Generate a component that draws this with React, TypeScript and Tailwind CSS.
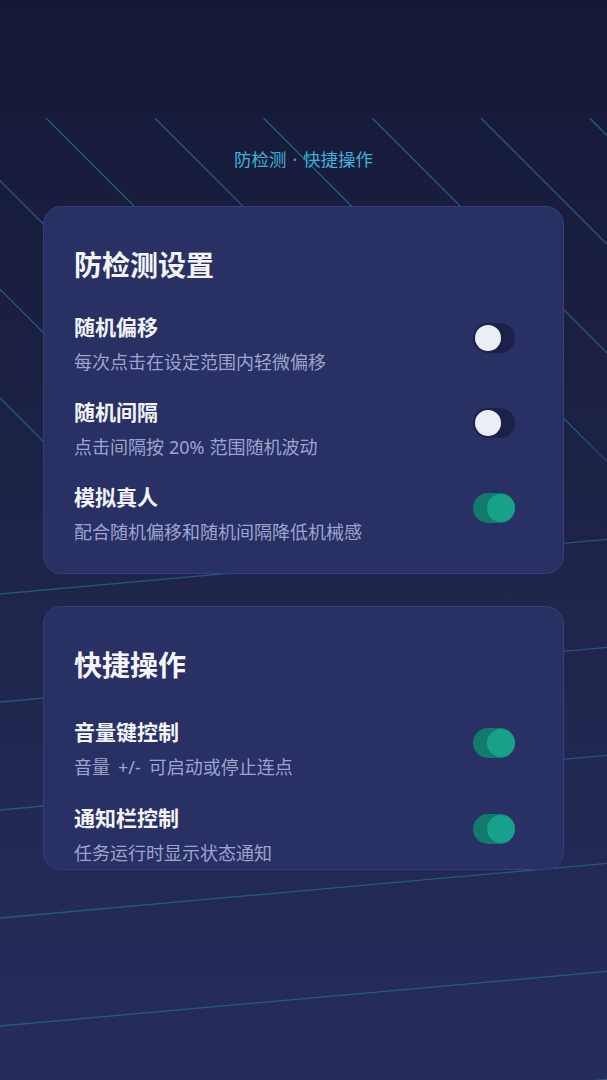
import React from "react";

type Item = { title: string; desc: React.ReactNode; on: boolean };

const group1: Item[] = [
  { title: "随机偏移", desc: "每次点击在设定范围内轻微偏移", on: false },
  { title: "随机间隔", desc: <>点击间隔按<span className="mx-[5px]">20%</span>范围随机波动</>, on: false },
  { title: "模拟真人", desc: "配合随机偏移和随机间隔降低机械感", on: true },
];

const group2: Item[] = [
  { title: "音量键控制", desc: <>音量<span className="mx-[8px]">+/-</span>可启动或停止连点</>, on: true },
  { title: "通知栏控制", desc: "任务运行时显示状态通知", on: true },
];

function Toggle({ on }: { on: boolean }) {
  return (
    <div
      className={
        "relative h-[30px] w-[42px] shrink-0 rounded-full mr-[18px] mb-[12px] " +
        (on ? "bg-[#137a6e]" : "bg-[#1c2148]")
      }
    >
      {on ? (
        <div className="absolute right-0 top-[1px] h-[28px] w-[28px] rounded-full bg-[#17a18a]" />
      ) : (
        <div className="absolute left-[2px] top-[2px] h-[26px] w-[26px] rounded-full bg-[#eceef5]" />
      )}
    </div>
  );
}

function Row({ item }: { item: Item }) {
  return (
    <div className="flex items-center justify-between">
      <div className="flex flex-col">
        <div className="text-[21px] leading-[28px] font-bold text-[#f3f4fa]">{item.title}</div>
        <div className="mt-[8px] text-[18px] leading-[26px] text-[#9ea4cd]">{item.desc}</div>
      </div>
      <Toggle on={item.on} />
    </div>
  );
}

function Background() {
  const diag: number[] = [];
  for (let k = -5; k <= 6; k++) diag.push(46 + 108.7 * k);
  const horiz: number[] = [];
  for (let k = 0; k <= 5; k++) horiz.push(594 + 108 * k);
  return (
    <svg className="absolute inset-0 h-full w-full" width="607" height="1080" viewBox="0 0 607 1080">
      <defs>
        <linearGradient id="fadeDiag" x1="0" y1="0" x2="0" y2="1080" gradientUnits="userSpaceOnUse">
          <stop offset="0" stopColor="#fff" stopOpacity="1" />
          <stop offset="0.40" stopColor="#fff" stopOpacity="1" />
          <stop offset="0.45" stopColor="#fff" stopOpacity="0" />
          <stop offset="1" stopColor="#fff" stopOpacity="0" />
        </linearGradient>
        <mask id="diagMask">
          <rect x="0" y="118" width="607" height="380" fill="url(#fadeDiag)" />
        </mask>
        <clipPath id="horizClip">
          <rect x="0" y="500" width="607" height="580" />
        </clipPath>
      </defs>
      <g mask="url(#diagMask)" stroke="#2a86a6" strokeOpacity="0.6" strokeWidth="1.3">
        {diag.map((x, i) => (
          <line key={i} x1={x} y1={118} x2={x + 400} y2={518} />
        ))}
      </g>
      <g clipPath="url(#horizClip)" stroke="#2a7ea2" strokeOpacity="0.55" strokeWidth="1.3">
        {horiz.map((y, i) => (
          <line key={i} x1={0} y1={y} x2={607} y2={y - 0.09 * 607} />
        ))}
      </g>
    </svg>
  );
}

export default function App() {
  return (
    <div
      className="relative h-[1080px] w-full overflow-hidden bg-gradient-to-b from-[#151937] via-[#1e2449] to-[#262d5c]"
      style={{ fontFamily: '"Noto Sans", "Noto Sans CJK SC", sans-serif' }}
    >
      <Background />
      <div className="relative flex flex-col px-[43px] pt-[147px]">
        <div className="text-center text-[17.5px] leading-[24px] text-[#3cb3d6]">
          防检测<span className="mx-[6px]">·</span>快捷操作
        </div>

        <div className="mt-[35px] rounded-[18px] border border-[#363e76] bg-[#293064] px-[30px] pt-[40px] pb-[28px]">
          <div className="text-[28px] leading-[36px] font-bold text-[#f5f6fb]">防检测设置</div>
          <div className="mt-[30px] flex flex-col gap-[23px]">
            {group1.map((it) => (
              <Row key={it.title} item={it} />
            ))}
          </div>
        </div>

        <div className="mt-[32px] rounded-[18px] border border-[#363e76] bg-[#293064] px-[30px] pt-[40px] pb-[3px]">
          <div className="text-[28px] leading-[36px] font-bold text-[#f5f6fb]">快捷操作</div>
          <div className="mt-[35px] flex flex-col gap-[24px]">
            {group2.map((it) => (
              <Row key={it.title} item={it} />
            ))}
          </div>
        </div>
      </div>
    </div>
  );
}
